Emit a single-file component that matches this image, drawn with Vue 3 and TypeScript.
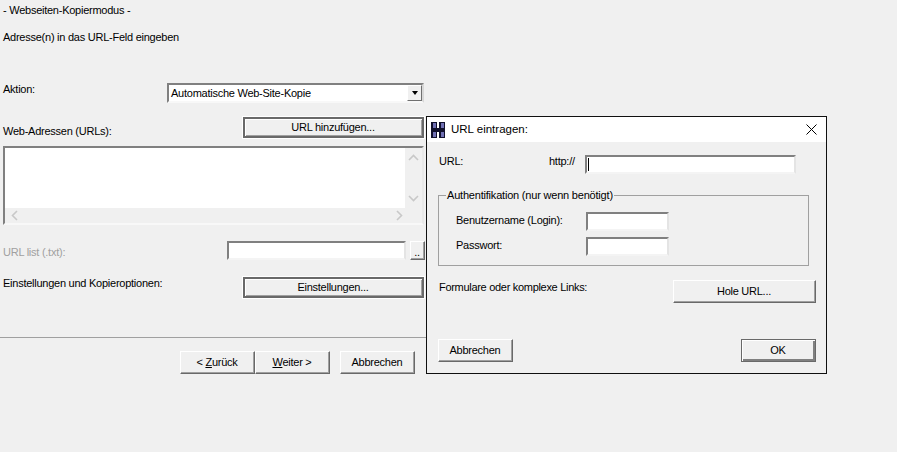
<script setup lang="ts">
const title: string = 'URL eintragen:'
</script>

<template>
  <div class="page">
    <main class="wizard">
      <p class="line first">- Webseiten-Kopiermodus -</p>
      <p class="line second">Adresse(n) in das URL-Feld eingeben</p>

      <div class="row action-row">
        <label class="lab action-label">Aktion:</label>
        <div class="select">
          <span class="select-text">Automatische Web-Site-Kopie</span>
          <span class="select-btn"><i class="caret"></i></span>
        </div>
      </div>

      <div class="row web-row">
        <label class="lab web-label">Web-Adressen (URLs):</label>
        <button class="btn heavy wide">URL hinzufügen...</button>
      </div>

      <div class="list">
        <div class="list-body">
          <div class="list-white"></div>
          <div class="vbar">
            <svg width="17" height="60" viewBox="0 0 17 60">
              <path d="M4 12 L8.5 7.5 L13 12" fill="none" stroke="#c8c8c8" stroke-width="1.6" />
              <path d="M4 48 L8.5 52.5 L13 48" fill="none" stroke="#c8c8c8" stroke-width="1.6" />
            </svg>
          </div>
        </div>
        <div class="hbar">
          <svg width="417" height="15" viewBox="0 0 417 15">
            <path d="M12 3 L7.5 7.5 L12 12" fill="none" stroke="#c8c8c8" stroke-width="1.6" />
            <path d="M392 3 L396.5 7.5 L392 12" fill="none" stroke="#c8c8c8" stroke-width="1.6" />
          </svg>
        </div>
      </div>

      <div class="row file-row">
        <label class="lab disabled file-label">URL list (.txt):</label>
        <div class="field file-field"></div>
        <button class="btn dots">..</button>
      </div>

      <div class="row opts-row">
        <label class="lab opts-label">Einstellungen und Kopieroptionen:</label>
        <button class="btn heavy wide">Einstellungen...</button>
      </div>

      <hr class="divider" />

      <div class="row nav-row">
        <button class="btn nav"><span>&lt; <u>Z</u>urück</span></button>
        <button class="btn nav"><span><u>W</u>eiter &gt;</span></button>
        <button class="btn nav cancel">Abbrechen</button>
      </div>
    </main>

    <section class="dialog">
      <header class="titlebar">
        <svg class="logo" width="16" height="16" viewBox="0 0 16 16">
          <rect width="16" height="16" fill="#fff" />
          <rect x="1" y="0" width="6" height="16" fill="#10102c" />
          <rect x="9" y="0" width="6" height="16" fill="#10102c" />
          <rect x="3" y="1" width="3" height="5" fill="#7070b4" />
          <rect x="3" y="10" width="3" height="5" fill="#7070b4" />
          <rect x="11" y="1" width="3" height="5" fill="#7070b4" />
          <rect x="11" y="10" width="3" height="5" fill="#7070b4" />
          <rect x="7" y="6" width="2" height="4" fill="#10102c" />
        </svg>
        <span class="title">{{ title }}</span>
        <svg class="close" width="11" height="11" viewBox="0 0 11 11">
          <path d="M0.5 0.5 L10.5 10.5 M10.5 0.5 L0.5 10.5" stroke="#000" stroke-width="1" fill="none" />
        </svg>
      </header>

      <div class="dialog-body">
        <div class="row url-row">
          <label class="lab url-label">URL:</label>
          <span class="lab http">http://</span>
          <div class="field url-field"><i class="cursor"></i></div>
        </div>

        <fieldset class="group">
          <legend>Authentifikation (nur wenn benötigt)</legend>
          <div class="row auth-row">
            <label class="lab auth-label">Benutzername (Login):</label>
            <div class="field auth-field"></div>
          </div>
          <div class="row auth-row second-auth">
            <label class="lab auth-label">Passwort:</label>
            <div class="field auth-field"></div>
          </div>
        </fieldset>

        <div class="row forms-row">
          <label class="lab forms-label">Formulare oder komplexe Links:</label>
          <button class="btn fetch">Hole URL...</button>
        </div>

        <div class="row foot-row">
          <button class="btn nav">Abbrechen</button>
          <button class="btn nav ok">OK</button>
        </div>
      </div>
    </section>
  </div>
</template>

<style>
html, body { margin: 0; background: #f0f0f0; }
</style>

<style scoped>
.page {
  position: relative;
  width: 897px;
  height: 452px;
  overflow: hidden;
  background: #f0f0f0;
  font-family: "Liberation Sans", Arial, sans-serif;
  font-size: 11px;
  letter-spacing: -0.25px;
  line-height: 13px;
  color: #000;
}
.wizard { width: 426px; display: flex; flex-direction: column; }
.line { margin: 0; padding-left: 3px; }
.first { margin-top: 4px; }
.second { margin-top: 14px; }
.row { display: flex; align-items: flex-start; }
.lab { display: block; white-space: nowrap; }
.disabled { color: #a0a0a0; }

.action-row { margin-top: 39px; height: 20px; padding-left: 3px; }
.action-label { width: 164px; }
.select {
  width: 257px; height: 20px; box-sizing: border-box;
  display: flex; align-items: center; justify-content: space-between;
  background: #fff;
  border: 2px solid; border-color: #808080 #d8d8d8 #f8f8f8 #808080;
  padding-left: 2px;
}
.select-text { display: block; }
.select-btn {
  width: 15px; height: 16px; background: #f0f0f0; box-sizing: border-box;
  border: 1px solid; border-color: #fff #707070 #707070 #fff;
  display: flex; align-items: center; justify-content: center;
}
.caret { width: 0; height: 0; border-left: 3.5px solid transparent; border-right: 3.5px solid transparent; border-top: 4px solid #000; }

.web-row { margin-top: 14px; height: 21px; padding-left: 3px; justify-content: space-between; padding-right: 2px; }
.web-label { padding-top: 8px; }
.btn {
  font: inherit; letter-spacing: inherit; color: #000; background: #f0f0f0; padding: 0 1px 0 0; margin: 0;
  box-sizing: border-box; text-align: center; display: block;
  border: 1px solid; border-color: #fff #696969 #696969 #fff;
  box-shadow: inset -1px -1px 0 #a0a0a0;
}
.heavy {
  border: 2px solid #696969;
  box-shadow: inset 1px 1px 0 #fff, inset -1px -1px 0 #a0a0a0;
  outline: 1px solid #fff;
}
.wide { width: 181px; height: 21px; }

.list {
  margin: 8px 2px 0 3px; height: 79px; box-sizing: border-box;
  border: 2px solid; border-color: #808080 #e8e8e8 #f8f8f8 #808080;
  display: flex; flex-direction: column;
}
.list-body { display: flex; height: 60px; }
.list-white { flex: 1; background: #fff; }
.vbar { width: 17px; }
.hbar { height: 15px; }
.vbar svg, .hbar svg { display: block; }

.file-row { margin-top: 16px; height: 19px; padding-left: 3px; }
.file-label { width: 224px; padding-top: 5px; }
.field {
  box-sizing: border-box; background: #fff;
  border: 2px solid; border-color: #808080 #e4e4e4 #f4f4f4 #808080;
}
.file-field { width: 179px; height: 19px; }
.dots { width: 15px; height: 19px; margin-left: 4px; line-height: 20px; }

.opts-row { margin-top: 17px; height: 21px; padding-left: 3px; justify-content: space-between; padding-right: 2px; }

.divider { margin: 39px 0 0; border: 0; height: 1px; background: #a0a0a0; }

.nav-row { margin-top: 13px; padding-left: 180px; }
.nav { width: 75px; height: 23px; }
.cancel { margin-left: 10px; }

.dialog {
  position: absolute; left: 426px; top: 116px; width: 401px; height: 258px;
  box-sizing: border-box; border: 1px solid #101010; background: #f0f0f0;
}
.titlebar { height: 25px; background: #fff; display: flex; align-items: center; padding-left: 3px; }
.logo { flex: none; }
.title { margin-left: 5px; font-size: 11.5px; letter-spacing: 0; }
.close { margin-left: auto; margin-right: 9px; }

.dialog-body { padding: 0 10px 0 11px; }
.url-row { padding-top: 13px; height: 19px; }
.url-label { width: 110px; padding-left: 1px; }
.http { width: 36px; }
.url-field { width: 211px; height: 19px; display: flex; align-items: center; padding-left: 1px; }
.cursor { width: 1px; height: 13px; background: #000; }

.group {
  margin: 15px 7px 0 0; padding: 0 0 0 8px; height: 77px; box-sizing: border-box;
  border: 1px solid #a0a0a0; min-width: 0;
}
.group legend { padding: 0 1px; margin-left: -1px; line-height: 13px; letter-spacing: -0.2px; }
.auth-row { height: 19px; margin-top: 10px; padding-left: 9px; }
.second-auth { margin-top: 6px; }
.auth-label { width: 130px; padding-top: 2px; }
.auth-field { width: 83px; height: 100%; }

.forms-row { margin-top: 14px; height: 23px; justify-content: space-between; }
.forms-label { padding-left: 1px; padding-top: 1px; letter-spacing: -0.3px; }
.fetch { width: 143px; height: 23px; }

.foot-row { margin-top: 36px; justify-content: space-between; }
.ok { border: 1px solid #696969; box-shadow: inset 1px 1px 0 #fff, inset -2px -2px 0 #808080; }
</style>
